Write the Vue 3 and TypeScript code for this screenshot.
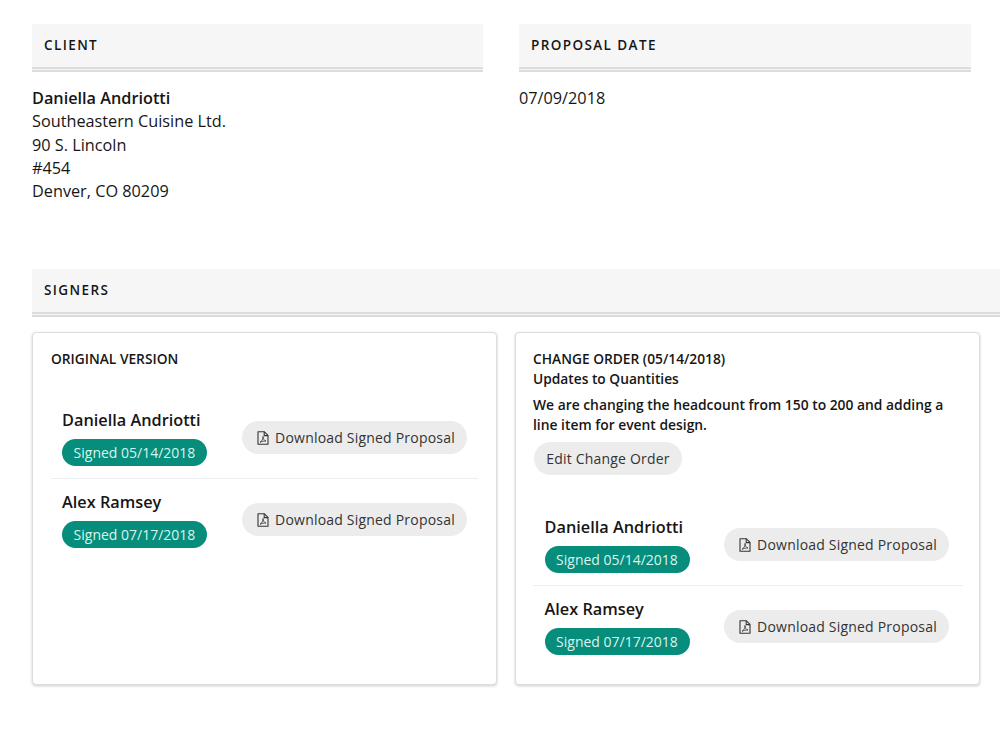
<script setup lang="ts">
interface Signer { name: string; signed: string }
const signers: Signer[] = [
  { name: 'Daniella Andriotti', signed: 'Signed 05/14/2018' },
  { name: 'Alex Ramsey', signed: 'Signed 07/17/2018' },
]
</script>

<template>
  <main class="page">
    <section class="top">
      <div class="col">
        <h2 class="band">CLIENT</h2>
        <address class="info">
          <strong>Daniella Andriotti</strong>
          <span>Southeastern Cuisine Ltd.</span>
          <span>90 S. Lincoln</span>
          <span>#454</span>
          <span>Denver, CO 80209</span>
        </address>
      </div>
      <div class="col">
        <h2 class="band">PROPOSAL DATE</h2>
        <div class="info"><span>07/09/2018</span></div>
      </div>
    </section>

    <section class="signers">
      <h2 class="band">SIGNERS</h2>
      <div class="cards">
        <article class="card">
          <h3 class="title solo">ORIGINAL VERSION</h3>
          <ul class="rows">
            <li v-for="s in signers" :key="s.name" class="row">
              <div class="who">
                <div class="name">{{ s.name }}</div>
                <span class="badge">{{ s.signed }}</span>
              </div>
              <button class="btn dl" type="button">
                <svg class="ico" viewBox="0 0 12 14" width="12" height="14" fill="none" stroke="#333" stroke-width="1.1">
                  <path d="M1 .8h6.4L11 4.4v8.8H1z" stroke-linejoin="round" />
                  <path d="M7.2 .8v3.8H11" />
                  <path d="M3 11.4c1.4-.8 3.4-3.6 3-6-.3 2 1.5 4.4 3 4.7-1.8-.3-4.4.2-6 1.3z" stroke-width=".8" stroke-linejoin="round" />
                </svg>
                Download Signed Proposal
              </button>
            </li>
          </ul>
        </article>

        <article class="card change">
          <h3 class="title">CHANGE ORDER (05/14/2018)</h3>
          <div class="title">Updates to Quantities</div>
          <p class="desc">We are changing the headcount from 150 to 200 and adding a line item for event design.</p>
          <button class="btn edit" type="button">Edit Change Order</button>
          <ul class="rows second">
            <li v-for="s in signers" :key="s.name" class="row">
              <div class="who">
                <div class="name">{{ s.name }}</div>
                <span class="badge">{{ s.signed }}</span>
              </div>
              <button class="btn dl" type="button">
                <svg class="ico" viewBox="0 0 12 14" width="12" height="14" fill="none" stroke="#333" stroke-width="1.1">
                  <path d="M1 .8h6.4L11 4.4v8.8H1z" stroke-linejoin="round" />
                  <path d="M7.2 .8v3.8H11" />
                  <path d="M3 11.4c1.4-.8 3.4-3.6 3-6-.3 2 1.5 4.4 3 4.7-1.8-.3-4.4.2-6 1.3z" stroke-width=".8" stroke-linejoin="round" />
                </svg>
                Download Signed Proposal
              </button>
            </li>
          </ul>
        </article>
      </div>
    </section>
  </main>
</template>

<style>
html, body { margin: 0; background: #fff; }
</style>

<style scoped>
.page {
  font-family: "Open Sans", "Liberation Sans", sans-serif;
  color: #161616;
  padding: 24px 0 46px 32px;
  font-size: 16.25px;
}
.top {
  display: grid;
  grid-template-columns: 451px 452px;
  column-gap: 36px;
  height: 245px;
}
.band {
  margin: 0;
  height: 43px;
  line-height: 43px;
  box-sizing: content-box;
  padding-left: 12px;
  background: #f6f6f6;
  border-bottom: 5px double #dcdcdc;
  font-size: 13.5px;
  font-weight: 600;
  letter-spacing: 1.4px;
}
.info {
  margin-top: 15px;
  display: flex;
  flex-direction: column;
  font-style: normal;
  line-height: 23.3px;
}
.info strong { font-weight: 600; }
.cards {
  display: flex;
  gap: 18px;
  margin-top: 15px;
}
.card {
  box-sizing: border-box;
  width: 465px;
  height: 353px;
  padding: 16px 18px;
  background: #fff;
  border: 1px solid #dedede;
  border-radius: 4px;
  box-shadow: 0 1px 3px rgba(0, 0, 0, .2);
}
.change { padding-left: 17px; padding-right: 16px; }
.title {
  margin: 0;
  font-size: 13.75px;
  font-weight: 600;
  line-height: 20px;
}
.solo { margin-bottom: 28px; }
.desc {
  margin: 6px 0 7px;
  font-size: 13.85px;
  font-weight: 600;
  line-height: 20px;
}
.rows {
  list-style: none;
  margin: 0;
  padding: 0;
}
.rows.second { margin-top: 29px; }
.row {
  box-sizing: border-box;
  display: flex;
  align-items: center;
  justify-content: space-between;
  height: 82px;
  padding: 0 11px;
  border-bottom: 1px solid #eee;
}
.second .row { padding: 0 14px 0 11.5px; }
.row:last-child { border-bottom-color: transparent; }
.who { display: flex; flex-direction: column; align-items: flex-start; gap: 8px; }
.name {
  font-size: 16.3px;
  font-weight: 600;
  line-height: 21px;
}
.badge {
  box-sizing: border-box;
  width: 145px;
  height: 27px;
  line-height: 27px;
  text-align: center;
  border-radius: 14px;
  background: #068d7c;
  color: #d8f5ef;
  font-size: 14px;
}
.btn {
  font: inherit;
  font-size: 14px;
  color: #333;
  height: 33px;
  border: 0;
  border-radius: 17px;
  background: #ececec;
  padding: 0;
  display: inline-flex;
  align-items: center;
  justify-content: center;
}
.dl { width: 225px; gap: 6px; letter-spacing: .2px; padding-left: 3px; }
.edit { width: 148px; margin-left: 1px; letter-spacing: .2px; }
.ico { flex: none; }
</style>
